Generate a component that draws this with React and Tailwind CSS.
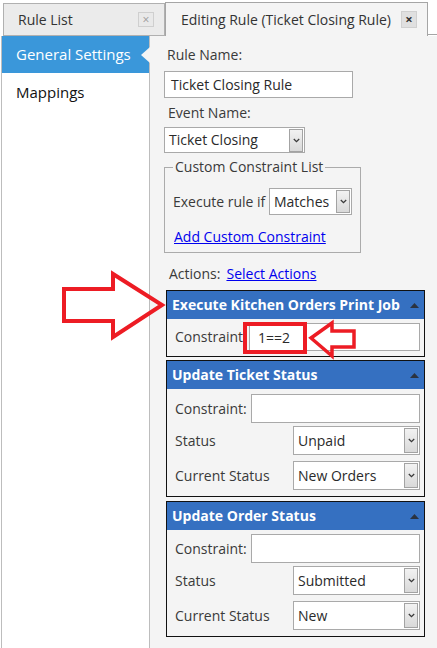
import React from 'react';

const FONT = "font-['Open_Sans','Noto_Sans',sans-serif]";

function Chevron() {
  return (
    <svg width="7" height="5" viewBox="0 0 7 5">
      <path d="M0.8 1 L3.5 3.6 L6.2 1" fill="none" stroke="#3a3a3a" strokeWidth="1.3" />
    </svg>
  );
}

/**
 * Fake select box with the old-style grey arrow button
 */
function Select({ value, className, btnClass = 'h-[23px]' }) {
  return (
    <div className={`flex items-center justify-between bg-white border border-[#a9a9a9] text-[14px] text-[#2a2a2a] ${className}`}>
      <span className="pl-[4px] leading-none whitespace-nowrap">{value}</span>
      <div className={`w-[14px] mr-[1px] flex items-center justify-center border border-[#a3a3a3] bg-gradient-to-b from-[#f2f2f2] to-[#d9d9d9] ${btnClass}`}>
        <Chevron />
      </div>
    </div>
  );
}

function Input({ value, className }) {
  return (
    <div className={`flex items-center bg-white border border-[#a9a9a9] text-[14px] text-[#2a2a2a] ${className}`}>
      {value}
    </div>
  );
}

function PanelHeader({ title }) {
  return (
    <div className="h-[28px] bg-[#3570c1] flex items-center justify-between pl-[5px] pr-[5px]">
      <span className="text-white font-bold text-[14px] leading-none whitespace-nowrap">{title}</span>
      <svg width="9" height="5" viewBox="0 0 9 5">
        <path d="M0 5 L4.5 0 L9 5 Z" fill="#2b3340" />
      </svg>
    </div>
  );
}

function StatusPanel({ title, status, current, pt }) {
  return (
    <div className="border border-[#111] w-[259px]">
      <PanelHeader title={title} />
      <div className={`flex flex-col pb-[6px] ${pt}`}>
        <div className="flex items-center h-[29px]">
          <span className="pl-[8px] w-[84px] text-[14px] text-[#3a3a3a] leading-none">Constraint:</span>
          <Input className="w-[169px] h-[29px]" value="" />
        </div>
        <div className="flex items-center h-[29px] mt-[3px]">
          <span className="pl-[8px] w-[126px] text-[14px] text-[#3a3a3a] leading-none">Status</span>
          <Select className="w-[127px] h-[29px]" btnClass="h-[25px]" value={status} />
        </div>
        <div className="flex items-center h-[29px] mt-[6px]">
          <span className="pl-[8px] w-[126px] text-[14px] text-[#3a3a3a] leading-none whitespace-nowrap">Current Status</span>
          <Select className="w-[127px] h-[29px]" btnClass="h-[25px]" value={current} />
        </div>
      </div>
    </div>
  );
}

export default function App() {
  return (
    <div className={`relative w-[437px] h-[648px] overflow-hidden bg-white flex flex-col ${FONT}`}>
      {/* tab strip */}
      <div className="h-[36px] flex items-end shrink-0">
        <div className="ml-[3px] w-[162px] h-[33px] border border-[#b0b0b0] bg-[#ebebeb] flex items-center justify-between">
          <span className="pl-[14px] text-[14px] text-[#333] leading-none">Rule List</span>
          <div className="mr-[10px] w-[16px] h-[15px] border border-[#cfcfcf] bg-[#e9e9e9] flex items-center justify-center text-[#9a9a9a] text-[12px] leading-none">×</div>
        </div>
        <div className="w-[263px] h-[34px] border-t border-l border-r border-[#a5a5a5] bg-[#f4f4f4] flex items-center justify-between">
          <span className="pl-[15px] text-[14px] text-[#333] leading-none whitespace-nowrap">Editing Rule (Ticket Closing Rule)</span>
          <div className="mr-[10px] w-[16px] h-[17px] bg-[#e0e0e0] border border-[#d0d0d0] flex items-center justify-center text-[#333] font-bold text-[13px] leading-none">×</div>
        </div>
        <div className="flex-1 h-[2px] border-b border-[#a5a5a5] mb-[1px]" />
      </div>

      <div className="flex flex-1">
        {/* left navigation */}
        <div className="ml-[1px] w-[149px] bg-white border-l border-r border-[#bdbdbd] flex flex-col">
          <div className="relative h-[37px] bg-[#3a97da] flex items-center pl-[14px]">
            <span className="text-white text-[15px] leading-none">General Settings</span>
            <div className="absolute right-[-1px] top-[11px] w-0 h-0 border-y-[8px] border-y-transparent border-r-[9px] border-r-[#f4f4f4]" />
          </div>
          <div className="h-[38px] flex items-center pl-[14px]">
            <span className="text-[#111] text-[15px] leading-none">Mappings</span>
          </div>
        </div>

        {/* editor */}
        <div className="flex-1 bg-[#f4f4f4] pl-[14px] flex flex-col">
          <div className="mt-[9px] h-[20px] leading-[20px] pl-[3px] text-[14px] text-[#3a3a3a]">Rule Name:</div>
          <Input className="mt-[6px] w-[189px] h-[27px] pl-[6px]" value="Ticket Closing Rule" />
          <div className="mt-[5px] h-[20px] leading-[20px] pl-[4px] text-[14px] text-[#3a3a3a]">Event Name:</div>
          <Select className="mt-[4px] w-[141px] h-[26px]" btnClass="h-[23px]" value="Ticket Closing" />

          <fieldset className="mt-[4px] w-[193px] border border-[#ababab] px-[8px] pb-[6px]">
            <legend className="px-[2px] h-[20px] leading-[20px] text-[14px] text-[#3a3a3a]">Custom Constraint List</legend>
            <div className="mt-[11px] flex items-center">
              <span className="w-[96px] text-[14px] text-[#3a3a3a] leading-none whitespace-nowrap">Execute rule if</span>
              <Select className="w-[83px] h-[27px]" btnClass="h-[23px]" value="Matches" />
            </div>
            <div className="mt-[11px] h-[20px] leading-[20px] pl-[1px]">
              <span className="text-[14px] text-[#0000ee] underline">Add Custom Constraint</span>
            </div>
          </fieldset>

          <div className="mt-[11px] h-[20px] leading-[20px] pl-[5px] text-[14px] flex">
            <span className="text-[#3a3a3a]">Actions:</span>
            <span className="ml-[6px] text-[#0000ee] underline">Select Actions</span>
          </div>

          <div className="ml-[2px] mt-[6px] flex flex-col">
            <div className="border border-[#111] w-[259px]">
              <PanelHeader title="Execute Kitchen Orders Print Job" />
              <div className="flex items-center pt-[4px] pb-[5px]">
                <span className="pl-[8px] w-[82px] text-[14px] text-[#3a3a3a] leading-none">Constraint</span>
                <Input className="w-[171px] h-[28px] pl-[8px]" value="1==2" />
              </div>
            </div>
            <div className="mt-[3px]">
              <StatusPanel title="Update Ticket Status" status="Unpaid" current="New Orders" pt="pt-[5px]" />
            </div>
            <div className="mt-[4px]">
              <StatusPanel title="Update Order Status" status="Submitted" current="New" pt="pt-[4px]" />
            </div>
          </div>
        </div>
      </div>

      {/* red annotations drawn over the screenshot */}
      <svg className="absolute inset-0 pointer-events-none" width="437" height="648" viewBox="0 0 437 648">
        <polygon points="64,289 113,289 113,274 162,305 113,337 113,321 64,321" fill="none" stroke="#ed1c24" strokeWidth="4" strokeLinejoin="miter" />
        <rect x="245" y="324" width="60" height="28" fill="none" stroke="#ed1c24" strokeWidth="4" />
        <polygon points="311,338 332,323 332,331 354,331 354,347 332,347 332,356" fill="none" stroke="#ed1c24" strokeWidth="3.5" />
      </svg>
    </div>
  );
}
